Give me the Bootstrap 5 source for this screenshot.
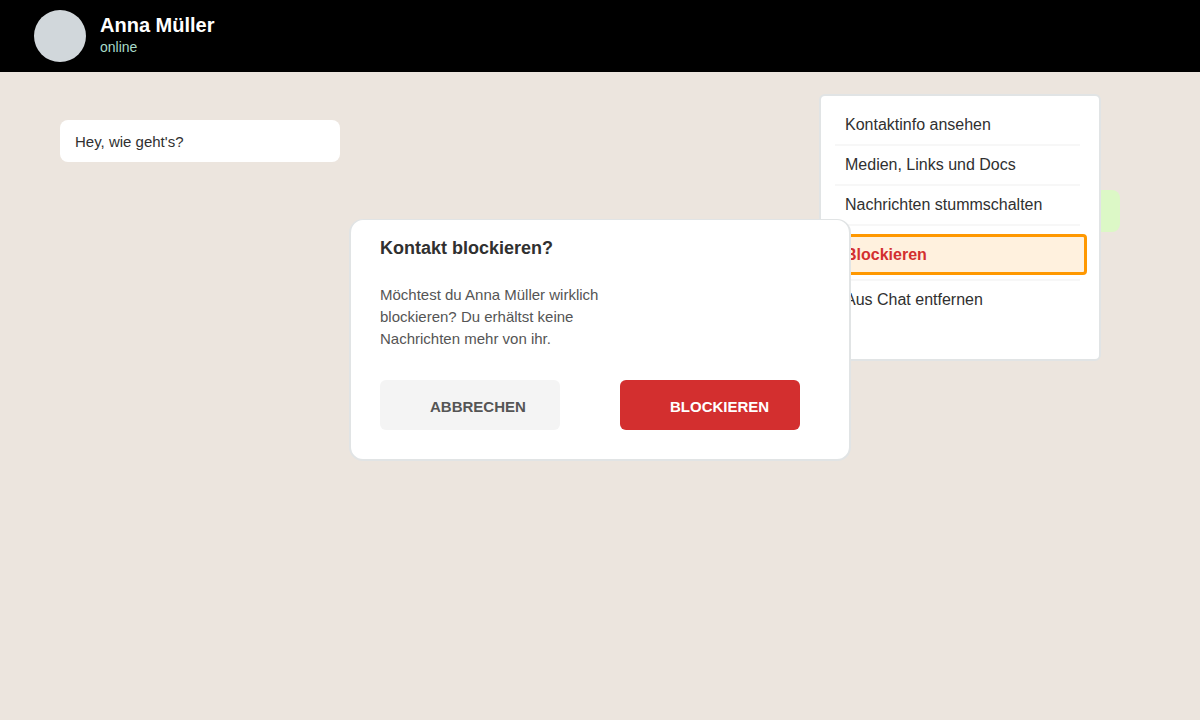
<!DOCTYPE html>
<html lang="de">
<head>
<meta charset="utf-8">
<meta name="viewport" content="width=device-width, initial-scale=1">
<title>Anna Müller</title>
<link href="https://cdn.jsdelivr.net/npm/bootstrap@5.3.0/dist/css/bootstrap.min.css" rel="stylesheet">
<style>
  body { background: #ece5de; color: #303030; font-family: "Liberation Sans", Arial, sans-serif; font-size: 16px; }
  .chat-header { background: #000; padding: 10px 34px; gap: 14px; }
  .avatar { width: 52px; height: 52px; background: #d1d7db; }
  .chat-who { padding-bottom: 2px; }
  .chat-name { font-size: 20px; line-height: 24px; color: #fff; }
  .chat-status { font-size: 14px; line-height: 20px; color: #a7dbc9; }
  .chat-body { padding: 48px 80px 48px 60px; gap: 28px; }
  .bubble { width: 280px; height: 42px; padding: 2px 15px 0; border-radius: 8px; font-size: 15px; background: #fff; }
  .bubble-out { background: #dcf8c6; }
  .chat-menu { top: 94px; right: 99px; width: 282px; height: 267px; padding: 10px 14px 0; background: #fff; border: 2px solid #e1e4e5; border-radius: 6px; z-index: 10; }
  .menu-entry { display: flex; align-items: center; width: 245px; height: 40px; padding: 0 10px; border: 0; border-bottom: 2px solid #f7f7f7; background: none; color: #303030; text-align: left; }
  .menu-last { height: 38px; border-bottom: 0; }
  .menu-spot { padding: 8px 0 4px; width: 245px; border-bottom: 2px solid #f7f7f7; }
  .menu-block { width: 252px; height: 41px; padding: 0 7px; border: 3px solid #ff9800; border-radius: 4px; background: #fff1de; color: #d32f2f; text-align: left; }
  .confirm { top: 219px; left: 50%; width: 502px; max-width: 100%; padding: 15px 29px 29px; background: #fff; border: 2px solid #e1e4e5; border-top-width: 1px; border-radius: 14px; z-index: 20; }
  .confirm-title { font-size: 18px; line-height: 26px; margin-bottom: 23px; }
  .confirm-text { width: 240px; font-size: 15px; line-height: 22px; color: #555; margin-bottom: 30px; }
  .confirm-actions { gap: 60px; }
  .confirm-btn { width: 180px; height: 50px; padding: 4px 0 0 50px; border: 0; border-radius: 6px; font-size: 15px; text-align: left; }
  .btn-cancel { background: #f4f4f4; color: #555; }
  .btn-confirm { background: #d32f2f; color: #fff; }
</style>
</head>
<body class="position-relative min-vh-100">
<header class="chat-header d-flex align-items-center">
  <div class="avatar rounded-circle flex-shrink-0"></div>
  <div class="chat-who">
    <h1 class="chat-name fw-bold m-0">Anna Müller</h1>
    <p class="chat-status m-0">online</p>
  </div>
</header>
<main class="chat-body d-flex flex-column">
  <div class="bubble d-flex align-items-center">Hey, wie geht's?</div>
  <div class="bubble bubble-out align-self-end"></div>
</main>
<nav class="chat-menu position-absolute" aria-label="Chatmenü">
  <button type="button" class="menu-entry">Kontaktinfo ansehen</button>
  <button type="button" class="menu-entry">Medien, Links und Docs</button>
  <button type="button" class="menu-entry">Nachrichten stummschalten</button>
  <div class="menu-spot"><button type="button" class="menu-block fw-bold">Blockieren</button></div>
  <button type="button" class="menu-entry menu-last">Aus Chat entfernen</button>
</nav>
<section class="confirm position-absolute translate-middle-x" role="dialog" aria-labelledby="confirm-title">
  <h2 class="confirm-title fw-bold" id="confirm-title">Kontakt blockieren?</h2>
  <p class="confirm-text">Möchtest du Anna Müller wirklich blockieren? Du erhältst keine Nachrichten mehr von ihr.</p>
  <div class="confirm-actions d-flex">
    <button type="button" class="confirm-btn btn-cancel fw-bold">ABBRECHEN</button>
    <button type="button" class="confirm-btn btn-confirm fw-bold">BLOCKIEREN</button>
  </div>
</section>
<script src="https://cdn.jsdelivr.net/npm/bootstrap@5.3.0/dist/js/bootstrap.bundle.min.js"></script>
</body>
</html>
